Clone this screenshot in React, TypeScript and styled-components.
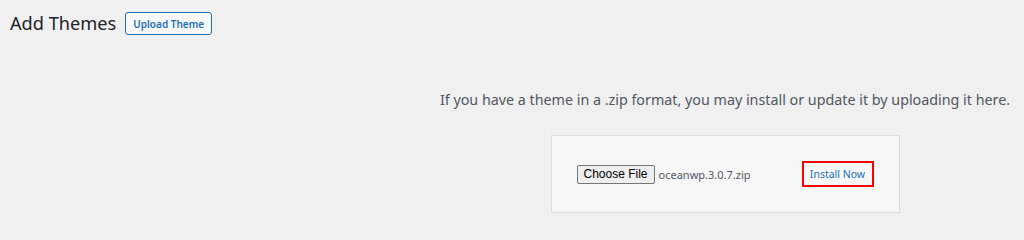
import React from 'react'
import styled, { createGlobalStyle } from 'styled-components'

const GlobalStyle = createGlobalStyle`
  html, body {
    margin: 0;
    padding: 0;
    background: #f0f0f1;
    font-family: "Noto Sans", "Open Sans", sans-serif;
    color: #3c434a;
  }
`

const Page = styled.div`
  width: 1024px;
  height: 234px;
  overflow: hidden;
  box-sizing: border-box;
  padding: 11px 0 0 10px;
`

const Header = styled.div`
  display: flex;
  align-items: center;
  gap: 9px;
  height: 25px;
`

const Title = styled.h1`
  margin: 0;
  font-size: 18.2px;
  font-weight: 400;
  color: #1d2327;
  line-height: 25px;
`

const OutlineButton = styled.button`
  height: 23px;
  padding: 0 7px;
  border: 1px solid #2271b1;
  border-radius: 3px;
  background: #f6f7f7;
  color: #2271b1;
  font-family: inherit;
  font-size: 10px;
  font-weight: 600;
  cursor: pointer;
`

const UploadSection = styled.div`
  display: flex;
  flex-direction: column;
  align-items: center;
  box-sizing: border-box;
  padding-left: 416px;
  padding-top: 53px;
`

const Description = styled.p`
  margin: 0;
  font-size: 14.3px;
  color: #50575e;
  line-height: 22px;
`

const FormBox = styled.form`
  margin-top: 24px;
  width: 349px;
  height: 78px;
  box-sizing: border-box;
  border: 1px solid #dcdcde;
  background: #f6f7f7;
  display: flex;
  align-items: center;
  justify-content: center;
`

const FilePicker = styled.div`
  display: flex;
  align-items: center;
  gap: 4px;
  width: 225px;
`

const ChooseButton = styled.button`
  height: 19px;
  padding: 0 6px;
  border: 1px solid #767676;
  border-radius: 2px;
  background: #efefef;
  color: #000;
  font-family: "Liberation Sans", Arial, sans-serif;
  font-size: 12px;
  line-height: 17px;
`

const FileName = styled.span`
  font-size: 11px;
  color: #50575e;
`

const Highlight = styled.div`
  width: 72px;
  height: 26px;
  box-sizing: border-box;
  border: 2px solid #f00;
  display: flex;
  align-items: center;
  justify-content: center;
`

const LinkButton = styled.button`
  border: none;
  background: none;
  padding: 0;
  color: #2271b1;
  font-family: inherit;
  font-size: 10.5px;
`

export default function App() {
  return (
    <>
      <GlobalStyle />
      <Page>
        <Header>
          <Title>Add Themes</Title>
          <OutlineButton>Upload Theme</OutlineButton>
        </Header>
        <UploadSection>
          <Description>
            If you have a theme in a .zip format, you may install or update it by uploading it here.
          </Description>
          <FormBox>
            <FilePicker>
              <ChooseButton type="button">Choose File</ChooseButton>
              <FileName>oceanwp.3.0.7.zip</FileName>
            </FilePicker>
            <Highlight>
              <LinkButton type="button">Install Now</LinkButton>
            </Highlight>
          </FormBox>
        </UploadSection>
      </Page>
    </>
  )
}
